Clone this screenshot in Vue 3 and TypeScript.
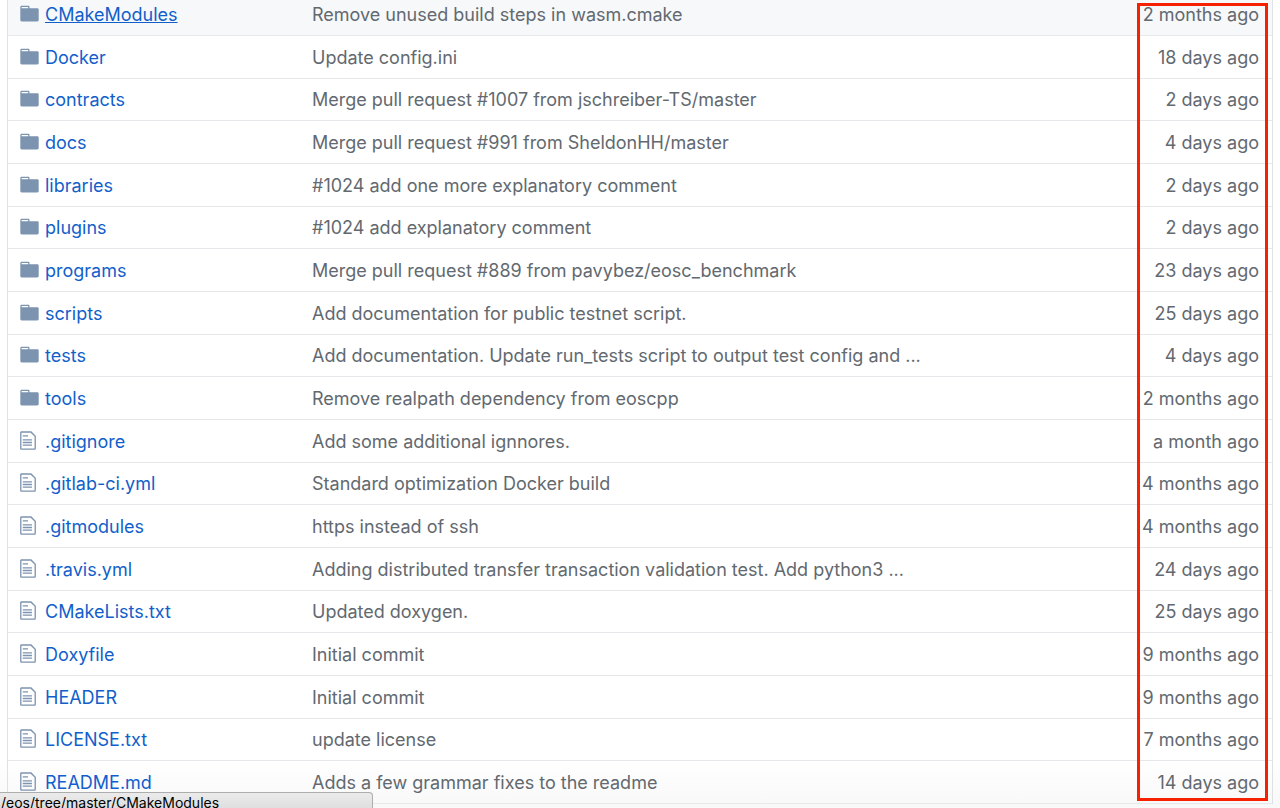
<script setup lang="ts">
interface Entry {
  name: string
  message: string
  age: string
  folder?: boolean
}

const entries: Entry[] = [
  { name: 'CMakeModules', message: 'Remove unused build steps in wasm.cmake', age: '2 months ago', folder: true },
  { name: 'Docker', message: 'Update config.ini', age: '18 days ago', folder: true },
  { name: 'contracts', message: 'Merge pull request #1007 from jschreiber-TS/master', age: '2 days ago', folder: true },
  { name: 'docs', message: 'Merge pull request #991 from SheldonHH/master', age: '4 days ago', folder: true },
  { name: 'libraries', message: '#1024 add one more explanatory comment', age: '2 days ago', folder: true },
  { name: 'plugins', message: '#1024 add explanatory comment', age: '2 days ago', folder: true },
  { name: 'programs', message: 'Merge pull request #889 from pavybez/eosc_benchmark', age: '23 days ago', folder: true },
  { name: 'scripts', message: 'Add documentation for public testnet script.', age: '25 days ago', folder: true },
  { name: 'tests', message: 'Add documentation. Update run_tests script to output test config and ...', age: '4 days ago', folder: true },
  { name: 'tools', message: 'Remove realpath dependency from eoscpp', age: '2 months ago', folder: true },
  { name: '.gitignore', message: 'Add some additional ignnores.', age: 'a month ago' },
  { name: '.gitlab-ci.yml', message: 'Standard optimization Docker build', age: '4 months ago' },
  { name: '.gitmodules', message: 'https instead of ssh', age: '4 months ago' },
  { name: '.travis.yml', message: 'Adding distributed transfer transaction validation test. Add python3 ...', age: '24 days ago' },
  { name: 'CMakeLists.txt', message: 'Updated doxygen.', age: '25 days ago' },
  { name: 'Doxyfile', message: 'Initial commit', age: '9 months ago' },
  { name: 'HEADER', message: 'Initial commit', age: '9 months ago' },
  { name: 'LICENSE.txt', message: 'update license', age: '7 months ago' },
  { name: 'README.md', message: 'Adds a few grammar fixes to the readme', age: '14 days ago' },
]
</script>

<template>
  <main class="page">
    <table class="files">
      <tbody>
        <tr v-for="(entry, i) in entries" :key="entry.name" :class="{ hovered: i === 0 }">
          <td class="name">
            <div class="name-inner">
              <span class="icon">
                <svg v-if="entry.folder" class="folder" viewBox="0 0 14 16" aria-hidden="true">
                  <path fill-rule="evenodd" d="M13 4H7V3c0-.66-.31-1-1-1H1c-.55 0-1 .45-1 1v10c0 .55.45 1 1 1h12c.55 0 1-.45 1-1V5c0-.55-.45-1-1-1zM6 4H1V3h5v1z" />
                </svg>
                <svg v-else class="file" viewBox="0 0 12 16" aria-hidden="true">
                  <path fill-rule="evenodd" d="M6 5H2V4h4v1zM2 8h7V7H2v1zm0 2h7V9H2v1zm0 2h7v-1H2v1zm10-7.5V14c0 .55-.45 1-1 1H1c-.55 0-1-.45-1-1V2c0-.55.45-1 1-1h7.5L12 4.5zM11 5L8 2H1v12h10V5z" />
                </svg>
              </span>
              <a href="#">{{ entry.name }}</a>
            </div>
          </td>
          <td class="message">{{ entry.message }}</td>
          <td class="age">{{ entry.age }}</td>
        </tr>
      </tbody>
    </table>
    <div class="highlight"></div>
    <div class="status">/eos/tree/master/CMakeModules</div>
  </main>
</template>

<style>
body {
  margin: 0;
  background: #fff;
}
</style>

<style scoped>
.page {
  position: relative;
  box-sizing: border-box;
  height: 100vh;
  overflow: hidden;
  padding: 0 7px;
  background: linear-gradient(to top, #f8f8f9, #fff 48px);
  font-family: Inter, "Liberation Sans", sans-serif;
  font-size: 18px;
  line-height: 24px;
  color: #62696f;
}

.files {
  width: 100%;
  margin-top: -7px;
  border-collapse: separate;
  border-spacing: 0;
  border-left: 1px solid #dfe2e5;
  border-right: 1px solid #dfe2e5;
  table-layout: fixed;
}

tr {
  height: 43px;
}

tr:nth-child(3n) {
  height: 42px;
}

td {
  padding: 1px 0 0;
  border-bottom: 1px solid #e6e8eb;
  white-space: nowrap;
}

.hovered td {
  background: #f6f8fa;
}

.name {
  width: 304px;
}

.name-inner {
  display: flex;
  align-items: flex-start;
  padding-left: 12px;
}

.icon {
  display: flex;
  width: 25px;
}

.icon svg {
  height: 21px;
  fill: #7d94b0;
}

.folder {
  width: 19px;
}

.file {
  width: 16px;
}

a {
  color: #125fcb;
  text-decoration: none;
}

.hovered a {
  text-decoration: underline;
}

.age {
  width: 140px;
  padding-right: 13px;
  text-align: right;
}

.highlight {
  position: absolute;
  top: 3px;
  right: 12px;
  bottom: 7px;
  width: 125px;
  border: 3px solid #f52100;
  pointer-events: none;
}

.status {
  position: absolute;
  left: 0;
  bottom: 0;
  box-sizing: border-box;
  width: 373px;
  height: 16px;
  padding-left: 1px;
  border-top: 1px solid #adadad;
  border-right: 1px solid #adadad;
  border-top-right-radius: 4px;
  background: linear-gradient(#ebebeb, #dfdfdf);
  color: #000;
  font-size: 14px;
  line-height: 20px;
  white-space: nowrap;
}
</style>
